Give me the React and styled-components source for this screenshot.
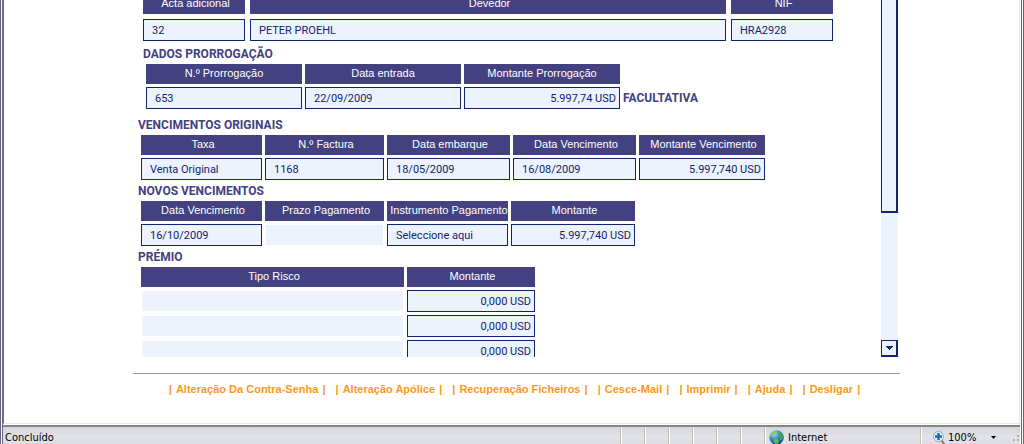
import React from "react";
import styled, { createGlobalStyle } from "styled-components";

const GlobalStyle = createGlobalStyle`
  * {
    box-sizing: border-box;
  }

  body {
    margin: 0;
    background: #fff;
    font-family: "Liberation Sans", Arial, sans-serif;
    font-size: 11px;
  }
`;

const Window = styled.div`
  display: flex;
  flex-direction: column;
  min-height: 100vh;
  padding: 0 1px 0 0;
  border-left: 3px double #66647c;
  border-right: 3px double #66647c;
`;

const Page = styled.div`
  display: flex;
  flex: 1;
  flex-direction: column;
  align-items: center;
  border-left: 1px solid #77756b;
  border-right: 1px solid #ece9d8;
  border-bottom: 1px solid #ece9d8;
  padding-left: 10px;
`;

const Content = styled.main`
  width: 100%;
  max-width: 767px;
`;

const ScrollArea = styled.div`
  display: flex;
  height: 357px;
  padding-right: 2px;
  overflow: hidden;
`;

const Form = styled.div`
  display: flex;
  flex: 1;
  flex-direction: column;
  justify-content: flex-start;
  align-items: flex-start;
  margin-top: -11px;
  padding-left: 5px;
`;

const Section = styled.section`
  padding-left: ${({ $inset }) => ($inset ? "5px" : "0")};
  padding-bottom: ${({ $inset }) => ($inset ? "5px" : "0")};
`;

const Title = styled.h2`
  height: 15px;
  margin: 0;
  color: #434180;
  font-family: Roboto, "Liberation Sans", sans-serif;
  font-size: 12px;
  font-weight: bold;
  line-height: 17px;
`;

const Line = styled.div`
  display: flex;
  align-items: flex-end;
`;

const Note = styled.strong`
  color: #434180;
  font-family: Roboto, "Liberation Sans", sans-serif;
  font-size: 12px;
  line-height: 28px;
`;

const Table = styled.table`
  table-layout: fixed;
  width: ${({ $width }) => $width}px;
  border-collapse: separate;
  border-spacing: ${({ $gap }) => $gap || 3}px;
`;

const Head = styled.th`
  height: 20px;
  padding: 0 0 2px ${({ $centered }) => ($centered ? "0" : "3px")};
  background: #434180;
  color: #fff;
  font-size: 11px;
  font-weight: normal;
  line-height: 18px;
  white-space: nowrap;
`;

const Cell = styled.td`
  height: 22px;
  padding: 2px ${({ $right }) => ($right ? "3px" : "8px")} 0;
  border: 1px solid ${({ $empty }) => ($empty ? "#fff" : "#10246f")};
  background: #ecf3fc;
  color: #10246f;
  font-family: Roboto, "Liberation Sans", sans-serif;
  font-size: 11px;
  line-height: 18px;
  text-align: ${({ $right }) => ($right ? "right" : "left")};
  white-space: nowrap;
`;

const Select = styled.select`
  display: block;
  width: 100%;
  height: 18px;
  padding: 0;
  border: 0;
  background: transparent;
  color: inherit;
  font: inherit;
  appearance: none;
`;

const ScrollBar = styled.div`
  display: flex;
  flex-direction: column;
  justify-content: space-between;
  width: 17px;
  background: #ecf3fc;
`;

const Thumb = styled.div`
  height: 213px;
  border: solid #10246f;
  border-width: 0 2px 2px 1px;
`;

const ScrollButton = styled.button`
  display: flex;
  align-items: center;
  justify-content: center;
  width: 17px;
  height: 17px;
  padding: 0;
  border: solid #10246f;
  border-width: 1px 2px 2px 1px;
  background: #ecf3fc;
`;

const Footer = styled.nav`
  display: flex;
  flex-wrap: wrap;
  justify-content: center;
  gap: 10px;
  margin-top: 16px;
  padding: 8px 4px 24px 0;
  border-top: 1px solid #999;
`;

const FooterLink = styled.a`
  color: #ff9912;
  font-size: 11px;
  font-weight: bold;
  line-height: 15px;
  text-decoration: none;
  white-space: nowrap;

  span {
    padding: 0 1px;
  }
`;

const StatusBar = styled.footer`
  display: flex;
  height: 19px;
  margin-top: 1px;
  border-top: 2px solid #84848c;
  background: linear-gradient(#d4d5dc, #e2e2e8 60%, #dcdce4);
  color: #000;
  font-family: "DejaVu Sans Condensed", Tahoma, sans-serif;
  font-size: 11px;
`;

const StatusText = styled.div`
  flex: 1;
  padding-left: 2px;
  line-height: 22px;
`;

const Panel = styled.div`
  display: flex;
  align-items: center;
  gap: 4px;
  width: ${({ $width }) => $width || 24}px;
  padding-top: 4px;
  padding-left: ${({ $pad }) => $pad || 0}px;
  border-left: 1px solid #bfbdb0;
  box-shadow: inset 1px 0 #fff;
`;

const ZoomButton = styled.button`
  display: flex;
  align-items: center;
  gap: 3px;
  padding: 0;
  border: 0;
  background: none;
  color: inherit;
  font: inherit;

  .arrow {
    margin-left: 12px;
  }
`;

const Grip = styled.svg`
  align-self: flex-end;
  margin-left: auto;
`;

const Globe = () => (
  <svg width="15" height="15" viewBox="0 0 15 15" aria-hidden="true">
    <defs>
      <radialGradient id="sea" cx="35%" cy="25%" r="80%">
        <stop offset="0" stopColor="#a8d4fa" />
        <stop offset="0.5" stopColor="#3a80dc" />
        <stop offset="1" stopColor="#123a86" />
      </radialGradient>
    </defs>
    <circle cx="7.5" cy="7.5" r="7.2" fill="url(#sea)" />
    <path d="M1.5 4.5 4 1.6l3-.8 1 1.4-1.6 1.4L5 4.8 4.2 7 2.6 6.2 1 7Z" fill="#7fd05a" />
    <path d="m9.5 2 2.6 1 1.6 3-.4 3.6-1.8 1-1.2-2.2.6-2.2L9 4.6Z" fill="#3fae3c" />
    <path d="m5.4 8.6 3.4.4 1.4 1.8-1.4 2.6-2.4.6-1.8-2.4Z" fill="#55bf48" />
  </svg>
);

const Magnifier = () => (
  <svg width="12" height="14" viewBox="0 0 12 14" aria-hidden="true">
    <path d="m8.5 9.5 2.4 3.3" stroke="#a5713c" strokeWidth="2" strokeLinecap="round" />
    <circle cx="5.5" cy="5.5" r="5" fill="#e2f0ff" stroke="#8eaccb" />
    <path d="M5.5 2v7M2 5.5h7" stroke="#1767cf" strokeWidth="2.4" />
  </svg>
);

const DataTable = ({ label, columns, rows, gap = 3, centered }) => {
  const width = columns.reduce((sum, col) => sum + col.width + gap, gap);

  return (
    <Table $width={width} $gap={gap} aria-label={label}>
      <colgroup>
        {columns.map((col) => (
          <col key={col.name} width={col.width} />
        ))}
      </colgroup>
      <thead>
        <tr>
          {columns.map((col) => (
            <Head key={col.name} scope="col" $centered={centered}>
              {col.name}
            </Head>
          ))}
        </tr>
      </thead>
      <tbody>
        {rows.map((row, r) => (
          <tr key={r}>
            {row.map((value, i) => (
              <Cell key={i} $right={columns[i].right} $empty={!value}>
                {columns[i].select ? (
                  <Select aria-label={columns[i].name}>
                    <option>{value}</option>
                  </Select>
                ) : (
                  value
                )}
              </Cell>
            ))}
          </tr>
        ))}
      </tbody>
    </Table>
  );
};

const debtor = [
  { name: "Acta adicional", width: 102 },
  { name: "Devedor", width: 476 },
  { name: "NIF", width: 102 },
];

const extension = [
  { name: "N.º Prorrogação", width: 156 },
  { name: "Data entrada", width: 156 },
  { name: "Montante Prorrogação", width: 156, right: true },
];

const originalDates = [
  { name: "Taxa", width: 121 },
  { name: "N.º Factura", width: 119 },
  { name: "Data embarque", width: 123 },
  { name: "Data Vencimento", width: 123 },
  { name: "Montante Vencimento", width: 126, right: true },
];

const newDates = [
  { name: "Data Vencimento", width: 121 },
  { name: "Prazo Pagamento", width: 119 },
  { name: "Instrumento Pagamento", width: 121, select: true },
  { name: "Montante", width: 124, right: true },
];

const premium = [
  { name: "Tipo Risco", width: 263 },
  { name: "Montante", width: 128, right: true },
];

const links = [
  "Alteração Da Contra-Senha",
  "Alteração Apólice",
  "Recuperação Ficheiros",
  "Cesce-Mail",
  "Imprimir",
  "Ajuda",
  "Desligar",
];

const App = () => {
  return (
    <>
      <GlobalStyle />
      <Window>
        <Page>
          <Content>
            <ScrollArea>
              <Form>
                <DataTable
                  label="Devedor"
                  columns={debtor}
                  gap={5}
                  rows={[["32", "PETER PROEHL", "HRA2928"]]}
                />
                <Section $inset>
                  <Title>DADOS PRORROGAÇÃO</Title>
                  <Line>
                    <DataTable
                      label="Dados prorrogação"
                      columns={extension}
                      centered
                      rows={[["653", "22/09/2009", "5.997,74 USD"]]}
                    />
                    <Note>FACULTATIVA</Note>
                  </Line>
                </Section>
                <Section>
                  <Title>VENCIMENTOS ORIGINAIS</Title>
                  <DataTable
                    label="Vencimentos originais"
                    columns={originalDates}
                    rows={[
                      [
                        "Venta Original",
                        "1168",
                        "18/05/2009",
                        "16/08/2009",
                        "5.997,740 USD",
                      ],
                    ]}
                  />
                </Section>
                <Section>
                  <Title>NOVOS VENCIMENTOS</Title>
                  <DataTable
                    label="Novos vencimentos"
                    columns={newDates}
                    rows={[["16/10/2009", "", "Seleccione aqui", "5.997,740 USD"]]}
                  />
                </Section>
                <Section>
                  <Title>PRÉMIO</Title>
                  <DataTable
                    label="Prémio"
                    columns={premium}
                    rows={[
                      ["", "0,000 USD"],
                      ["", "0,000 USD"],
                      ["", "0,000 USD"],
                    ]}
                  />
                </Section>
              </Form>
              <ScrollBar>
                <Thumb />
                <ScrollButton aria-label="Descer">
                  <svg width="7" height="4" viewBox="0 0 7 4" shapeRendering="crispEdges">
                    <path d="M0 0h7v1H6v1H5v1H4v1H3V3H2V2H1V1H0Z" fill="#10246f" />
                  </svg>
                </ScrollButton>
              </ScrollBar>
            </ScrollArea>
            <Footer>
              {links.map((link) => (
                <FooterLink key={link} href="#">
                  | <span>{link}</span> |
                </FooterLink>
              ))}
            </Footer>
          </Content>
        </Page>
        <StatusBar>
          <StatusText>Concluído</StatusText>
          <Panel />
          <Panel />
          <Panel />
          <Panel />
          <Panel />
          <Panel />
          <Panel $width={156} $pad={4}>
            <Globe />
            Internet
          </Panel>
          <Panel $width={100} $pad={12}>
            <ZoomButton>
              <Magnifier />
              100%
              <svg className="arrow" width="5" height="3" viewBox="0 0 5 3">
                <path d="M0 0h5L2.5 3Z" />
              </svg>
            </ZoomButton>
            <Grip width="9" height="9" viewBox="0 0 9 9" aria-hidden="true">
              <path d="M6 0h2v2H6zM6 4h2v2H6zM2 4h2v2H2z" fill="#b5b3a8" />
            </Grip>
          </Panel>
        </StatusBar>
      </Window>
    </>
  );
};

export default App;
